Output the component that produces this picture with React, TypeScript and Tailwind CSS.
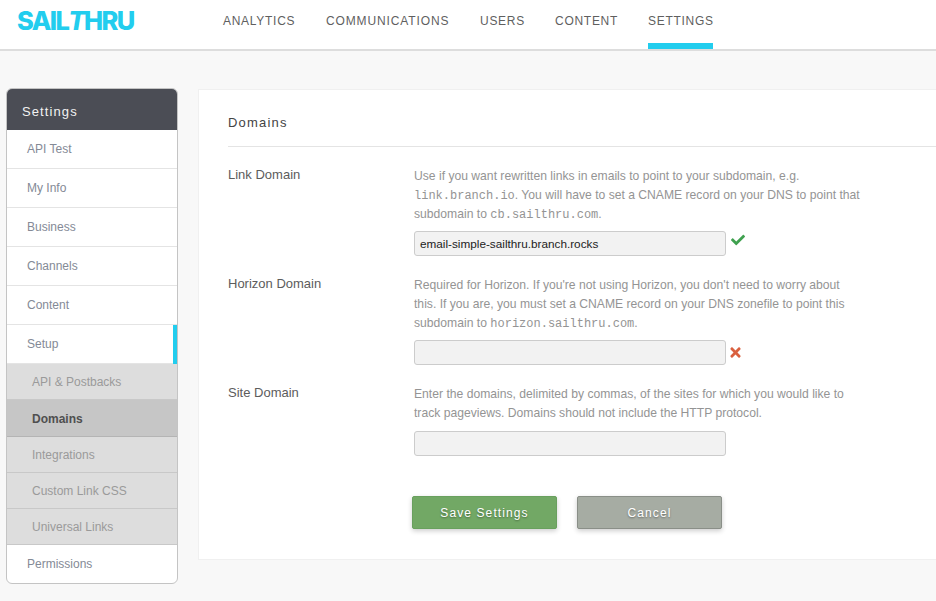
import type { ReactNode } from "react";
import { FaCheck, FaTimes } from "react-icons/fa";

const nav = [
  { label: "ANALYTICS", width: "w-[72px]" },
  { label: "COMMUNICATIONS", width: "w-[123px] tracking-[0.87px]" },
  { label: "USERS", width: "w-[44px]" },
  { label: "CONTENT", width: "w-[62px]" },
  { label: "SETTINGS", width: "w-[65px] border-b-[6px] border-[#22cdee]" },
];

function Mono({ children }: { children: string }) {
  return <span className="font-['Liberation_Mono',monospace] text-[12px] leading-none">{children}</span>;
}

function SideItem({ label, active }: { label: string; active?: boolean }) {
  return (
    <div className="relative flex h-[39px] items-center border-b border-[#e4e4e4] pl-[20px] text-[12px] text-[#848a96]">
      {label}
      {active && <div className="absolute top-0 right-0 bottom-[-1px] w-[4px] bg-[#22cdee]" />}
    </div>
  );
}

function SubItem({ label, active }: { label: string; active?: boolean }) {
  return (
    <div
      className={
        active
          ? "flex h-[37px] items-center border-b border-[#b4b4b4] bg-[#c6c6c6] pt-[1px] pl-[25px] text-[12px] font-bold text-[#4f4f4f]"
          : "flex h-[36px] items-center border-b border-[#c8c8c8] bg-[#dddddd] pl-[25px] text-[12px] text-[#9a9a9a]"
      }
    >
      {label}
    </div>
  );
}

function Field({
  label,
  help,
  value,
  status,
  short,
}: {
  label: string;
  help: ReactNode;
  value?: string;
  status?: "ok" | "bad";
  short?: boolean;
}) {
  return (
    <div className="flex">
      <div className="w-[186px] pt-[1px] text-[13px] leading-[19px] text-[#5c5c5c]">{label}</div>
      <div className="flex-1">
        <p className="w-[448px] pt-[3px] text-[12.15px] leading-[19px] text-[#949494]">{help}</p>
        <div className={short ? "mt-[8px] flex items-center" : "mt-[7px] flex items-center"}>
          <div className="flex h-[25px] w-[312px] items-center rounded-[3px] border border-[#cccccc] bg-[#f2f2f2] px-[5px] text-[11.75px] text-[#222222]">
            {value}
          </div>
          {status === "ok" && <FaCheck className="mt-[-8px] ml-[5px] text-[14px] text-[#3fa14f]" />}
          {status === "bad" && <FaTimes className="ml-[2px] text-[15px] text-[#d9603f]" />}
        </div>
      </div>
    </div>
  );
}

export default function App() {
  return (
    <div className="h-[601px] w-[936px] overflow-hidden bg-[#f8f8f8] font-['Liberation_Sans',Arial,sans-serif]">
      <header className="flex h-[51px] items-start border-b-2 border-[#dddddd] bg-white">
        <div className="mt-[5px] ml-[17px] w-[206px] font-['Inter',sans-serif] text-[25.5px] leading-[31px] font-extrabold tracking-[-1.6px] text-[#22cdee]">
          SAIL<i>T</i>HRU
        </div>
        <nav className="flex gap-[31px]">
          {nav.map((n) => (
            <div
              key={n.label}
              className={`h-[49px] pt-[14px] text-[12px] leading-[14px] tracking-[0.72px] whitespace-nowrap text-[#5f5f5f] ${n.width}`}
            >
              {n.label}
            </div>
          ))}
        </nav>
      </header>

      <div className="flex items-start pt-[37px] pl-[6px]">
        <aside className="w-[172px] overflow-hidden rounded-[6px] border border-[#c4c4c4] bg-white">
          <div className="flex h-[41px] items-center bg-[#4b4d55] pt-[4px] pl-[15px] text-[13px] tracking-[1.1px] text-[#f2f2f2]">
            Settings
          </div>
          <SideItem label="API Test" />
          <SideItem label="My Info" />
          <SideItem label="Business" />
          <SideItem label="Channels" />
          <SideItem label="Content" />
          <SideItem label="Setup" active />
          <SubItem label="API & Postbacks" />
          <SubItem label="Domains" active />
          <SubItem label="Integrations" />
          <SubItem label="Custom Link CSS" />
          <SubItem label="Universal Links" />
          <div className="flex h-[38px] items-center pl-[20px] text-[12px] text-[#848a96]">Permissions</div>
        </aside>

        <main className="mt-[1px] ml-[20px] h-[471px] flex-1 border border-r-0 border-[#f0f0f0] bg-white pt-[25px] pl-[29px]">
          <h1 className="border-b border-[#e4e4e4] pb-[15px] text-[13px] leading-[16px] tracking-[1.2px] text-[#444444]">
            Domains
          </h1>
          <div className="mt-[17px] flex flex-col gap-[17px]">
            <Field
              label="Link Domain"
              status="ok"
              value="email-simple-sailthru.branch.rocks"
              help={
                <>
                  Use if you want rewritten links in emails to point to your subdomain, e.g.{" "}
                  <Mono>link.branch.io</Mono>. You will have to set a CNAME record on your DNS to point that subdomain to{" "}
                  <Mono>cb.sailthru.com</Mono>.
                </>
              }
            />
            <Field
              label="Horizon Domain"
              status="bad"
              help={
                <>
                  Required for Horizon. If you're not using Horizon, you don't need to worry about this. If you are, you
                  must set a CNAME record on your DNS zonefile to point this subdomain to{" "}
                  <Mono>horizon.sailthru.com</Mono>.
                </>
              }
            />
            <Field
              label="Site Domain"
              short
              help="Enter the domains, delimited by commas, of the sites for which you would like to track pageviews. Domains should not include the HTTP protocol."
            />
          </div>
          <div className="mt-[40px] ml-[184px] flex gap-[20px]">
            <button className="h-[33px] w-[145px] rounded-[2px] border border-[#69a05e] bg-[#72a865] text-[12px] tracking-[1.1px] text-white shadow-[0_2px_5px_rgba(0,0,0,0.2)] [text-shadow:0_1px_2px_rgba(0,0,0,0.4)]">
              Save Settings
            </button>
            <button className="h-[33px] w-[145px] rounded-[2px] border border-[#8a8f88] bg-[#a6aca3] text-[12px] tracking-[1.1px] text-white shadow-[0_2px_5px_rgba(0,0,0,0.2)] [text-shadow:0_1px_2px_rgba(0,0,0,0.4)]">
              Cancel
            </button>
          </div>
        </main>
      </div>
    </div>
  );
}
